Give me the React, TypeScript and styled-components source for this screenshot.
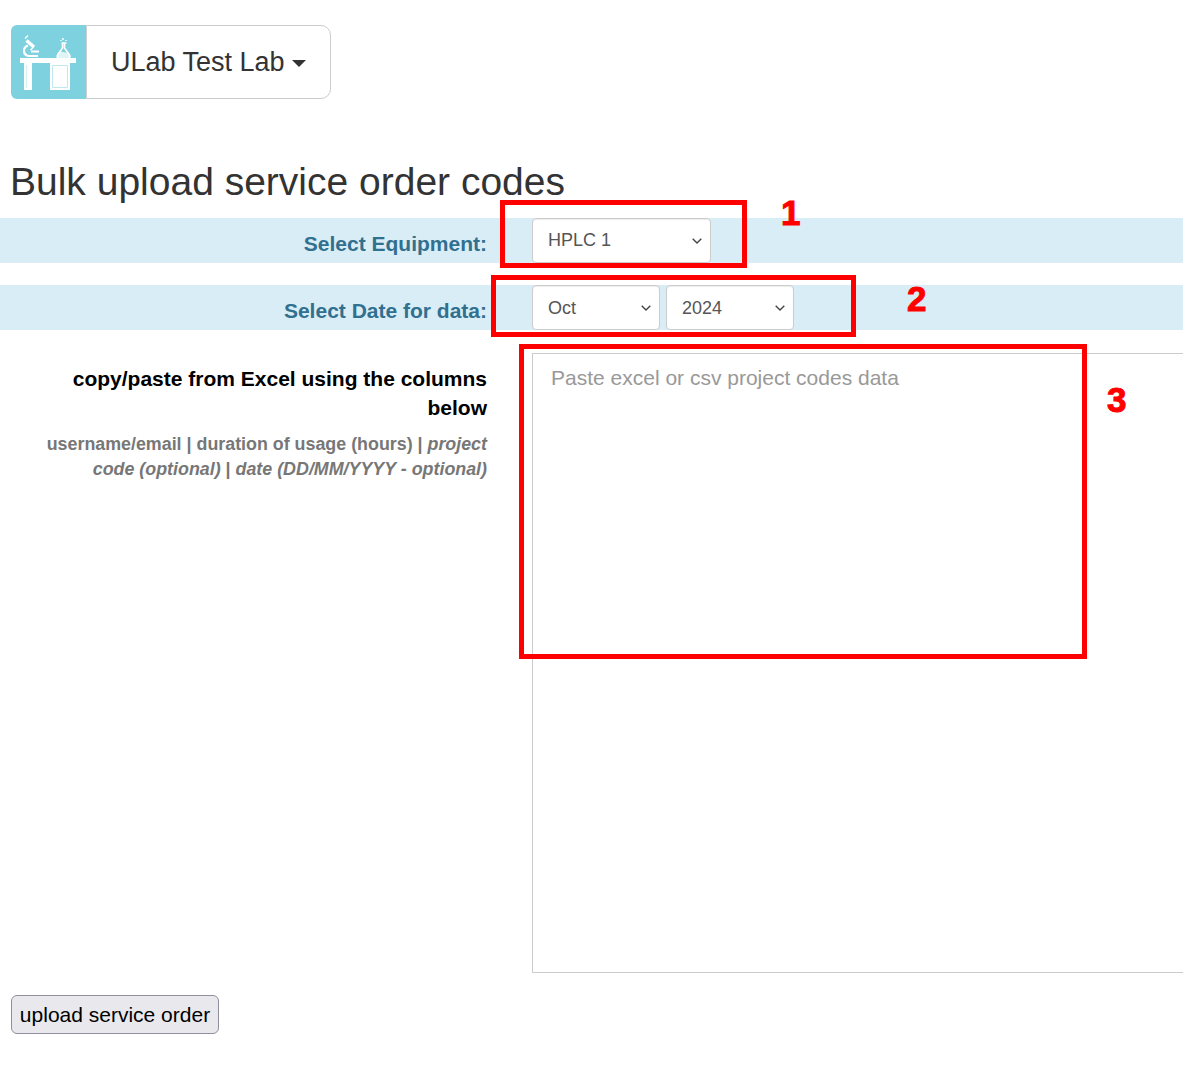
import styled, { createGlobalStyle } from 'styled-components';

const GlobalStyle = createGlobalStyle`
  html, body {
    margin: 0;
    padding: 0;
    background: #fff;
    overflow: hidden;
  }
  * {
    box-sizing: border-box;
  }
  body {
    font-family: "Liberation Sans", Arial, sans-serif;
    color: #333;
  }
`;

const Page = styled.div`
  position: relative;
  width: 1183px;
  height: 1081px;
  overflow: hidden;
  padding-top: 25px;
`;

const LabSwitcher = styled.div`
  display: flex;
  width: 320px;
  height: 74px;
  margin-left: 11px;
`;

const LogoTile = styled.div`
  display: flex;
  width: 75px;
  height: 74px;
  background: #7ed1de;
  border-radius: 6px 0 0 6px;
  flex-shrink: 0;
`;

const LabButton = styled.button`
  display: flex;
  align-items: center;
  flex: 1;
  padding: 0 0 0 24px;
  font-family: inherit;
  font-size: 27px;
  color: #333;
  background: #fff;
  border: 1px solid #ccc;
  border-radius: 0 10px 10px 0;
`;

const Caret = styled.span`
  display: inline-block;
  width: 0;
  height: 0;
  margin-left: 7px;
  margin-top: 3px;
  border-top: 7px solid #333;
  border-left: 7px solid transparent;
  border-right: 7px solid transparent;
`;

const Title = styled.h1`
  margin: 60px 0 14px 10px;
  height: 45px;
  font-size: 39px;
  line-height: 45px;
  font-weight: 400;
  color: #333;
`;

const FieldRow = styled.div`
  display: grid;
  grid-template-columns: 487px 1fr;
  column-gap: 45px;
  height: 45px;
  margin-bottom: 22px;
  background: #d9edf7;
`;

const FieldLabel = styled.label`
  padding-top: 13px;
  font-size: 21px;
  line-height: 26px;
  font-weight: 700;
  text-align: right;
  color: #31708f;
`;

const SelectGroup = styled.div`
  display: flex;
  gap: 6px;
`;

const Select = styled.select<{ $width: number; $lift?: boolean }>`
  width: ${(p) => p.$width}px;
  height: 45px;
  padding: 0 30px ${(p) => (p.$lift ? '2px' : '0')} 15px;
  font-family: inherit;
  font-size: 18px;
  color: #555;
  background-color: #fff;
  background-image: url("data:image/svg+xml,%3Csvg xmlns='http://www.w3.org/2000/svg' width='10' height='6' viewBox='0 0 10 6'%3E%3Cpath d='M.7.7 5 5l4.3-4.3' fill='none' stroke='%23444' stroke-width='1.4'/%3E%3C/svg%3E");
  background-repeat: no-repeat;
  background-position: right 8px center;
  border: 1px solid #ccc;
  border-radius: 4px;
  box-shadow: inset 0 1px 1px rgba(0, 0, 0, 0.075);
  appearance: none;
`;

const PasteRow = styled.div`
  display: grid;
  grid-template-columns: 487px 700px;
  column-gap: 45px;
  margin-top: 23px;
`;

const Instructions = styled.div`
  text-align: right;
`;

const InstructionTitle = styled.div`
  padding: 11px 0 0 40px;
  font-size: 21px;
  line-height: 29px;
  font-weight: 700;
  color: #000;
`;

const InstructionHint = styled.p`
  margin: 10px 0 0 1px;
  font-size: 17.85px;
  line-height: 25px;
  font-weight: 700;
  color: #777;
`;

const PasteArea = styled.textarea`
  display: block;
  width: 700px;
  height: 620px;
  padding: 11px 18px;
  font-family: inherit;
  font-size: 21px;
  line-height: 26px;
  color: #555;
  background: #fff;
  border: 1px solid #ccc;
  resize: none;
  outline: none;

  &::placeholder {
    color: #999;
    opacity: 1;
  }
`;

const UploadButton = styled.button`
  display: block;
  width: 208px;
  height: 39px;
  margin: 22px 0 0 11px;
  padding: 0;
  font-family: inherit;
  font-size: 21px;
  color: #000;
  background: #e9e9ed;
  border: 1px solid #8f8f9d;
  border-radius: 6px;
`;

const Annotation = styled.div<{ $left: number; $top: number; $width: number; $height: number }>`
  position: absolute;
  left: ${(p) => p.$left}px;
  top: ${(p) => p.$top}px;
  width: ${(p) => p.$width}px;
  height: ${(p) => p.$height}px;
  border: 5px solid #ff0000;
  pointer-events: none;
`;

const AnnotationNumber = styled.span<{ $left: number; $top: number }>`
  position: absolute;
  left: ${(p) => p.$left}px;
  top: ${(p) => p.$top}px;
  font-size: 35px;
  line-height: 40px;
  font-weight: 700;
  color: #ff0000;
  -webkit-text-stroke: 1px #ff0000;
`;

function LabBenchLogo() {
  return (
    <svg width="75" height="74" viewBox="0 0 75 74" aria-hidden="true">
      <g fill="#fff">
        <path d="M9 33h56v5H9z" />
        <path d="M13 38h8v27h-8zM39 38h20v27H39z" />
      </g>
      <path d="M41.5 40.500h15v22h-15z" fill="#fff" stroke="#bfe8ee" strokeWidth="1" />
      <path d="M15.500 40v23" stroke="#d8f1f5" strokeWidth="1.500" />
      <g fill="none" stroke="#fff">
        {/* microscope */}
        <path d="M15.500 15.500 23 22" strokeWidth="3.500" />
        <path d="M14 13.500l3-3M19.500 25l3-3" strokeWidth="1.500" />
        <path d="M17 20.500c-5.500 2-5.500 9.500 1 10.500h9" strokeWidth="2.200" />
        <path d="M20 26.500h8" strokeWidth="2" />
        {/* flask */}
        <path d="M50.500 18h5M51.500 18v5l-5 7c-1 2 0 3 2 3h8c2 0 3-1 2-3l-5-7v-5" strokeWidth="1.600" />
        <path d="M52 13v2M55 15v1M50 15v1" strokeWidth="1.400" />
      </g>
      <path d="M48.500 27c2.500-1 5.500 1.500 8.500 0l2.500 3.500c.500 1 0 1.500-1 1.500H47.500c-1 0-1.500-.500-1-1.500z" fill="#fff" opacity="0.75" />
    </svg>
  );
}

export default function App() {
  return (
    <Page>
      <GlobalStyle />
      <LabSwitcher>
        <LogoTile>
          <LabBenchLogo />
        </LogoTile>
        <LabButton type="button">
          ULab Test Lab
          <Caret />
        </LabButton>
      </LabSwitcher>

      <Title>Bulk upload service order codes</Title>

      <FieldRow>
        <FieldLabel>Select Equipment:</FieldLabel>
        <SelectGroup>
          <Select $width={179} $lift defaultValue="HPLC 1">
            <option>HPLC 1</option>
          </Select>
        </SelectGroup>
      </FieldRow>

      <FieldRow>
        <FieldLabel>Select Date for data:</FieldLabel>
        <SelectGroup>
          <Select $width={128} defaultValue="Oct">
            <option>Oct</option>
          </Select>
          <Select $width={128} defaultValue="2024">
            <option>2024</option>
          </Select>
        </SelectGroup>
      </FieldRow>

      <PasteRow>
        <Instructions>
          <InstructionTitle>copy/paste from Excel using the columns below</InstructionTitle>
          <InstructionHint>
            username/email | duration of usage (hours) | <em>project code (optional)</em> | <em>date (DD/MM/YYYY - optional)</em>
          </InstructionHint>
        </Instructions>
        <PasteArea placeholder="Paste excel or csv project codes data" />
      </PasteRow>

      <UploadButton type="button">upload service order</UploadButton>

      <Annotation $left={500} $top={200} $width={247} $height={68} />
      <Annotation $left={491} $top={275} $width={365} $height={62} />
      <Annotation $left={519} $top={344} $width={568} $height={315} />
      <AnnotationNumber $left={781} $top={193}>1</AnnotationNumber>
      <AnnotationNumber $left={907} $top={279}>2</AnnotationNumber>
      <AnnotationNumber $left={1107} $top={380}>3</AnnotationNumber>
    </Page>
  );
}
